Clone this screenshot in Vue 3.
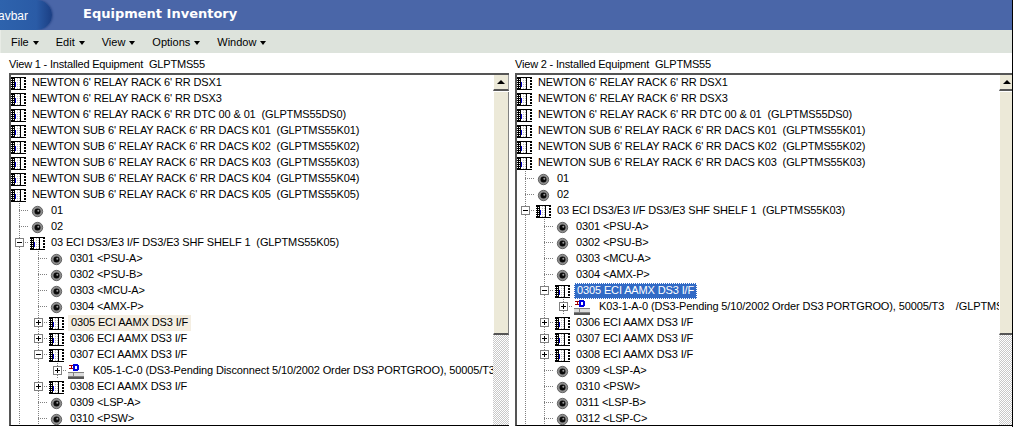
<script setup>
const gap = '    '
const leftRows = [
  { d: 0, i: 'rack', t: "NEWTON 6' RELAY RACK 6' RR DSX1" },
  { d: 0, i: 'rack', t: "NEWTON 6' RELAY RACK 6' RR DSX3" },
  { d: 0, i: 'rack', t: "NEWTON 6' RELAY RACK 6' RR DTC 00 & 01  (GLPTMS55DS0)" },
  { d: 0, i: 'rack', t: "NEWTON SUB 6' RELAY RACK 6' RR DACS K01  (GLPTMS55K01)" },
  { d: 0, i: 'rack', t: "NEWTON SUB 6' RELAY RACK 6' RR DACS K02  (GLPTMS55K02)" },
  { d: 0, i: 'rack', t: "NEWTON SUB 6' RELAY RACK 6' RR DACS K03  (GLPTMS55K03)" },
  { d: 0, i: 'rack', t: "NEWTON SUB 6' RELAY RACK 6' RR DACS K04  (GLPTMS55K04)" },
  { d: 0, i: 'rack', t: "NEWTON SUB 6' RELAY RACK 6' RR DACS K05  (GLPTMS55K05)" },
  { d: 1, i: 'dot', t: '01' },
  { d: 1, i: 'dot', t: '02' },
  { d: 1, i: 'rack', x: '-', t: '03 ECI DS3/E3 I/F DS3/E3 SHF SHELF 1  (GLPTMS55K05)' },
  { d: 2, i: 'dot', t: '0301 <PSU-A>' },
  { d: 2, i: 'dot', t: '0302 <PSU-B>' },
  { d: 2, i: 'dot', t: '0303 <MCU-A>' },
  { d: 2, i: 'dot', t: '0304 <AMX-P>' },
  { d: 2, i: 'rack', x: '+', s: 'hover', t: '0305 ECI AAMX DS3 I/F' },
  { d: 2, i: 'rack', x: '+', t: '0306 ECI AAMX DS3 I/F' },
  { d: 2, i: 'rack', x: '-', t: '0307 ECI AAMX DS3 I/F' },
  { d: 3, i: 'ds', x: '+', t: 'K05-1-C-0 (DS3-Pending Disconnect 5/10/2002 Order DS3 PORTGROO), 50005/T3' + gap + '/GLPTMS55' },
  { d: 2, i: 'rack', x: '+', t: '0308 ECI AAMX DS3 I/F' },
  { d: 2, i: 'dot', t: '0309 <LSP-A>' },
  { d: 2, i: 'dot', t: '0310 <PSW>' }
]
const rightRows = [
  { d: 0, i: 'rack', t: "NEWTON 6' RELAY RACK 6' RR DSX1" },
  { d: 0, i: 'rack', t: "NEWTON 6' RELAY RACK 6' RR DSX3" },
  { d: 0, i: 'rack', t: "NEWTON 6' RELAY RACK 6' RR DTC 00 & 01  (GLPTMS55DS0)" },
  { d: 0, i: 'rack', t: "NEWTON SUB 6' RELAY RACK 6' RR DACS K01  (GLPTMS55K01)" },
  { d: 0, i: 'rack', t: "NEWTON SUB 6' RELAY RACK 6' RR DACS K02  (GLPTMS55K02)" },
  { d: 0, i: 'rack', t: "NEWTON SUB 6' RELAY RACK 6' RR DACS K03  (GLPTMS55K03)" },
  { d: 1, i: 'dot', t: '01' },
  { d: 1, i: 'dot', t: '02' },
  { d: 1, i: 'rack', x: '-', t: '03 ECI DS3/E3 I/F DS3/E3 SHF SHELF 1  (GLPTMS55K03)' },
  { d: 2, i: 'dot', t: '0301 <PSU-A>' },
  { d: 2, i: 'dot', t: '0302 <PSU-B>' },
  { d: 2, i: 'dot', t: '0303 <MCU-A>' },
  { d: 2, i: 'dot', t: '0304 <AMX-P>' },
  { d: 2, i: 'rack', x: '-', s: 'sel', t: '0305 ECI AAMX DS3 I/F' },
  { d: 3, i: 'ds', x: '+', t: 'K03-1-A-0 (DS3-Pending 5/10/2002 Order DS3 PORTGROO), 50005/T3' + gap + '/GLPTMS55' },
  { d: 2, i: 'rack', x: '+', t: '0306 ECI AAMX DS3 I/F' },
  { d: 2, i: 'rack', x: '+', t: '0307 ECI AAMX DS3 I/F' },
  { d: 2, i: 'rack', x: '+', t: '0308 ECI AAMX DS3 I/F' },
  { d: 2, i: 'dot', t: '0309 <LSP-A>' },
  { d: 2, i: 'dot', t: '0310 <PSW>' },
  { d: 2, i: 'dot', t: '0311 <LSP-B>' },
  { d: 2, i: 'dot', t: '0312 <LSP-C>' }
]
const views = [
  { title: 'View 1 - Installed Equipment  GLPTMS55', rows: leftRows },
  { title: 'View 2 - Installed Equipment  GLPTMS55', rows: rightRows }
]
const menus = ['File', 'Edit', 'View', 'Options', 'Window']
</script>

<template>
  <div class="page">
    <header class="head">
      <div class="pill">avbar</div>
      <h1 class="title">Equipment Inventory</h1>
    </header>
    <nav class="menu">
      <span v-for="m in menus" :key="m" class="menu-item">{{ m }}<i class="caret"></i></span>
    </nav>
    <main class="views">
      <section v-for="v in views" :key="v.title" class="view">
        <div class="view-title">{{ v.title }}</div>
        <div class="box">
          <div class="tree">
            <div v-for="(r, n) in v.rows" :key="n" class="row">
              <span v-for="c in r.d" :key="c" class="cell" :class="{ last: c === r.d }">
                <span v-if="c === r.d && r.x" class="exp" :class="r.x === '+' ? 'plus' : 'minus'"></span>
              </span>
              <svg v-if="r.i === 'rack'" class="ico" width="15" height="13" viewBox="0 0 15 13" shape-rendering="crispEdges">
                <rect x="0" y="0" width="15" height="13" fill="#000" />
                <path d="M0 2h3M0 4h3M0 6h3M0 8h3M0 10h3" stroke="#fff" stroke-dasharray="1 1" transform="translate(0 .5)" />
                <rect x="4" y="1" width="5" height="11" fill="#fff" />
                <rect x="4" y="5" width="1" height="5" fill="#0000d0" />
                <path d="M6 1v11M8 1v11" stroke="#bdbdbd" stroke-dasharray="1 1" transform="translate(.5 0)" />
                <rect x="10" y="1" width="3" height="11" fill="#fff" />
                <path d="M13 2h2M13 5h2M13 8h2M13 11h2" stroke="#fff" transform="translate(0 .5)" />
              </svg>
              <svg v-else-if="r.i === 'dot'" class="ico" width="15" height="13" viewBox="0 0 15 13">
                <circle cx="7.5" cy="6.5" r="5.2" fill="#8c8c8c" stroke="#666" />
                <circle cx="7.5" cy="6.5" r="3" fill="#0a0a0a" />
                <circle cx="8.3" cy="5.7" r="1" fill="#9a9a9a" />
              </svg>
              <svg v-else class="ico" width="16" height="15" viewBox="0 0 16 15" shape-rendering="crispEdges">
                <path d="M1 1.500h4M3 1.500v3M1 4.500h4" stroke="#a00000" fill="none" />
                <path d="M5 0h4l2 2v3l-2 2H5zM7 2v3h1l1-1V3L8 2z" fill="#0000e0" fill-rule="evenodd" />
                <rect x="0" y="8" width="16" height="1" fill="#808080" />
                <rect x="0" y="9" width="16" height="3" fill="#dcdcdc" />
                <rect x="0" y="12" width="16" height="1" fill="#808080" />
                <rect x="0" y="13" width="16" height="2" fill="#555" />
                <rect x="5" y="9" width="1" height="3" fill="#808080" />
              </svg>
              <span class="label" :class="[r.s, 'd' + r.i]">{{ r.t }}</span>
            </div>
          </div>
          <div class="sb">
            <div class="sb-btn"><i class="up"></i></div>
            <div class="sb-thumb"></div>
            <div class="sb-track"></div>
          </div>
        </div>
      </section>
    </main>
  </div>
</template>

<style scoped>
.page {
  width: 1013px;
  height: 427px;
  overflow: hidden;
  background: #fff;
  font-family: "Liberation Sans", Arial, sans-serif;
  font-size: 11px;
  color: #000;
  display: flex;
  flex-direction: column;
  border-right: 1px solid #000;
  box-sizing: border-box;
}
.head {
  height: 30px;
  flex: none;
  background: #4a66a8;
  display: flex;
  align-items: center;
}
.pill {
  width: 52px;
  height: 30px;
  box-sizing: border-box;
  background: linear-gradient(90deg, #2e63ad, #2a5ba6 70%, #1b3f84);
  border-radius: 0 16px 16px 0;
  box-shadow: 1px 0 2px #2c4a8c;
  color: #fff;
  font-size: 12px;
  line-height: 32px;
  direction: rtl;
  padding-right: 24px;
  overflow: hidden;
  white-space: nowrap;
  margin-top: -1px;
}
.title {
  margin: 0 0 3px 31px;
  color: #fff;
  font: bold 13px "DejaVu Sans", sans-serif;
  letter-spacing: 0px;
}
.menu {
  height: 23px;
  flex: none;
  background: #dde3dc;
  display: flex;
  align-items: center;
  padding-left: 10px;
  border-left: 1px solid #e8ece6;
  box-sizing: border-box;
}
.menu-item {
  display: inline-flex;
  align-items: center;
  margin-right: 17px;
  font-size: 11px;
}
.caret {
  width: 0;
  height: 0;
  margin-left: 4px;
  margin-top: 2px;
  border-left: 3.5px solid transparent;
  border-right: 3.5px solid transparent;
  border-top: 4px solid #000;
}
.views {
  flex: 1;
  display: flex;
  min-height: 0;
}
.view {
  width: 506px;
  flex: none;
  padding-left: 9px;
  box-sizing: border-box;
  display: flex;
  flex-direction: column;
}
.view-title {
  height: 20px;
  line-height: 22px;
  font-size: 11px;
  letter-spacing: -0.18px;
  white-space: pre;
}
.box {
  width: 500px;
  flex: none;
  box-sizing: border-box;
  height: 353px;
  display: flex;
  border-top: 2px solid #555;
  border-left: 2px solid #555;
  border-bottom: 1px solid #000;
}
.tree {
  flex: 1;
  min-width: 0;
  overflow: hidden;
}
.row {
  height: 16px;
  display: flex;
  align-items: center;
  white-space: pre;
}
.cell {
  width: 19px;
  height: 16px;
  flex: none;
  position: relative;
  background: linear-gradient(#808080 50%, transparent 50%) 8px 0 / 1px 2px repeat-y;
}
.cell.last::after {
  content: "";
  position: absolute;
  left: 8px;
  top: 7px;
  width: 10px;
  height: 1px;
  background: linear-gradient(90deg, #808080 50%, transparent 50%) 0 0 / 2px 1px repeat-x;
}
.exp {
  position: absolute;
  left: 4px;
  top: 3px;
  width: 9px;
  height: 9px;
  box-sizing: border-box;
  border: 1px solid #808080;
  background: #fff;
  z-index: 1;
}
.exp::before {
  content: "";
  position: absolute;
  left: 1px;
  top: 3px;
  width: 5px;
  height: 1px;
  background: #000;
}
.plus::after {
  content: "";
  position: absolute;
  left: 3px;
  top: 1px;
  width: 1px;
  height: 5px;
  background: #000;
}
.ico {
  flex: none;
  display: block;
}
.label {
  line-height: 14px;
  padding-bottom: 2px;
  font-size: 11px;
  letter-spacing: -0.13px;
}
.drack, .ddot {
  margin-left: 6px;
}
.dds {
  margin-left: 9px;
}
.label.sel, .label.hover {
  padding: 0 3px 2px;
  margin-left: 4px;
}
.hover {
  background: #f4eee2;
}
.sel {
  background: #316ac5;
  color: #fff;
  outline: 1px dotted #fff;
  outline-offset: -1px;
}
.sb {
  width: 16px;
  flex: none;
  display: flex;
  flex-direction: column;
}
.sb-btn {
  height: 16px;
  flex: none;
  box-sizing: border-box;
  background: #ece9d8;
  border-bottom: 2px solid #555;
  border-right: 1px solid #999;
  border-left: 1px solid #fff;
  display: flex;
  align-items: center;
  justify-content: center;
}
.up {
  width: 0;
  height: 0;
  border-left: 4px solid transparent;
  border-right: 4px solid transparent;
  border-bottom: 4px solid #000;
}
.sb-thumb {
  height: 243px;
  margin-top: 1px;
  flex: none;
  box-sizing: border-box;
  background: #ece9d8;
  border-left: 1px solid #fff;
  border-right: 1px solid #808080;
  border-bottom: 2px solid #555;
}
.sb-track {
  flex: 1;
  background: repeating-conic-gradient(#c8c8c8 0 25%, #fff 0 50%) 0 0 / 2px 2px;
}
</style>
